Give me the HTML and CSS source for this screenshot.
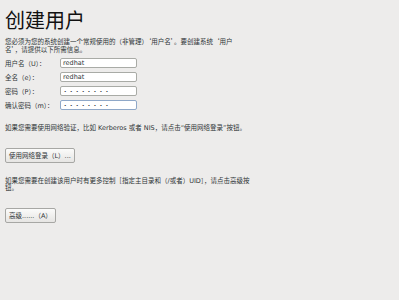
FILE: index.html
```html
<!doctype html>
<html lang="zh-CN">
  <head>
    <meta charset="UTF-8" />
    <title>创建用户</title>
    <link rel="stylesheet" href="styles.css">
  </head>
  <body>
    <div class="page">
      <h1>创建用户</h1>
      <p class="intro">您必须为您的系统创建一个常规使用的（非管理）‘用户名’。要创建系统‘用户名’，请提供以下所需信息。</p>
      <form class="user-form">
        <div class="form-row">
          <label for="username">用户名（U）：</label>
          <input type="text" id="username" value="redhat" />
        </div>
        <div class="form-row">
          <label for="fullname">全名（e）：</label>
          <input type="text" id="fullname" value="redhat" />
        </div>
        <div class="form-row">
          <label for="password">密码（P）：</label>
          <input type="password" id="password" value="12345678" />
        </div>
        <div class="form-row">
          <label for="confirm">确认密码（m）：</label>
          <input type="password" id="confirm" class="focused" value="12345678" />
        </div>
      </form>
      <p class="note">如果您需要使用网络验证，比如 Kerberos 或者 NIS，请点击“使用网络登录”按钮。</p>
      <button type="button">使用网络登录（L）...</button>
      <p class="note">如果您需要在创建该用户时有更多控制［指定主目录和（/或者）UID］，请点击高级按钮。</p>
      <button type="button">高级......（A）</button>
    </div>
  </body>
</html>
```

FILE: styles.css
```css
body {
  font-family: "DejaVu Sans", "Noto Sans CJK SC", sans-serif;
  margin: 0;
  background: #edeceb;
  color: #2e3436;
}
.page {
  padding: 9px 5px 0;
  width: 245px;
}
h1 {
  margin: 0;
  font-size: 20px;
  line-height: 22px;
  font-weight: normal;
  color: #111;
  font-family: "Noto Sans CJK SC", sans-serif;
}
p {
  margin: 0;
  font-size: 6.5px;
  line-height: 7.5px;
}
.intro {
  margin-top: 7px;
  width: 236px;
  font-family: "Noto Sans CJK SC", sans-serif;
}
.user-form {
  margin-top: 5px;
  display: flex;
  flex-direction: column;
  gap: 4px;
}
.form-row {
  display: flex;
  align-items: center;
  height: 10px;
}
label {
  width: 55px;
  font-size: 6.5px;
}
input {
  width: 77px;
  height: 10px;
  box-sizing: border-box;
  border: 1px solid #a9aba6;
  border-radius: 2px;
  background: #fff;
  padding: 0 2px;
  font-family: inherit;
  font-size: 6.5px;
  color: #2e3436;
}
input[type="password"] {
  font-size: 4px;
  letter-spacing: 3.6px;
  padding-left: 3px;
}
input.focused {
  border-color: #8fa8c8;
}
.note {
  margin-top: 15px;
}
button {
  display: block;
  margin-top: 15px;
  height: 15px;
  padding: 0 3px;
  border: 1px solid #a7a7a4;
  border-radius: 2px;
  background: linear-gradient(#fbfbfa, #e6e5e3);
  font-family: inherit;
  font-size: 6.5px;
  color: #2e3436;
}
```
